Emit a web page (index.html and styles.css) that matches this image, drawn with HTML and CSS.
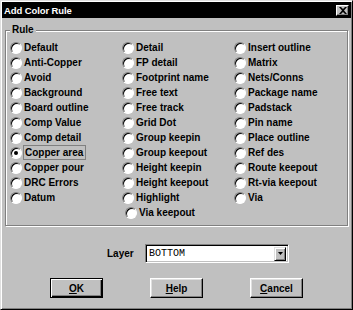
FILE: index.html
```html
<!DOCTYPE html>
<html lang="en">
<head>
  <meta charset="UTF-8">
  <title>Add Color Rule</title>
  <link rel="stylesheet" href="styles.css">
</head>
<body>
  <div class="window">
    <div class="titlebar">
      <span class="title">Add Color Rule</span>
      <span class="close-btn">
        <svg width="8" height="7" viewBox="0 0 8 7"><path d="M0 0h2l2 2 2-2h2L5 3.5 8 7H6L4 5 2 7H0l3-3.5z" fill="#000"/></svg>
      </span>
    </div>

    <div class="group">
      <span class="legend">Rule</span>
      <div class="columns">
        <div class="col">
          <div class="opt"><span class="radio"></span>Default</div>
          <div class="opt"><span class="radio"></span>Anti-Copper</div>
          <div class="opt"><span class="radio"></span>Avoid</div>
          <div class="opt"><span class="radio"></span>Background</div>
          <div class="opt"><span class="radio"></span>Board outline</div>
          <div class="opt"><span class="radio"></span>Comp Value</div>
          <div class="opt"><span class="radio"></span>Comp detail</div>
          <div class="opt"><span class="radio checked"></span><span class="focus">Copper area</span></div>
          <div class="opt"><span class="radio"></span>Copper pour</div>
          <div class="opt"><span class="radio"></span>DRC Errors</div>
          <div class="opt"><span class="radio"></span>Datum</div>
        </div>
        <div class="col">
          <div class="opt"><span class="radio"></span>Detail</div>
          <div class="opt"><span class="radio"></span>FP detail</div>
          <div class="opt"><span class="radio"></span>Footprint name</div>
          <div class="opt"><span class="radio"></span>Free text</div>
          <div class="opt"><span class="radio"></span>Free track</div>
          <div class="opt"><span class="radio"></span>Grid Dot</div>
          <div class="opt"><span class="radio"></span>Group keepin</div>
          <div class="opt"><span class="radio"></span>Group keepout</div>
          <div class="opt"><span class="radio"></span>Height keepin</div>
          <div class="opt"><span class="radio"></span>Height keepout</div>
          <div class="opt"><span class="radio"></span>Highlight</div>
          <div class="opt indent"><span class="radio"></span>Via keepout</div>
        </div>
        <div class="col">
          <div class="opt"><span class="radio"></span>Insert outline</div>
          <div class="opt"><span class="radio"></span>Matrix</div>
          <div class="opt"><span class="radio"></span>Nets/Conns</div>
          <div class="opt"><span class="radio"></span>Package name</div>
          <div class="opt"><span class="radio"></span>Padstack</div>
          <div class="opt"><span class="radio"></span>Pin name</div>
          <div class="opt"><span class="radio"></span>Place outline</div>
          <div class="opt"><span class="radio"></span>Ref des</div>
          <div class="opt"><span class="radio"></span>Route keepout</div>
          <div class="opt"><span class="radio"></span>Rt-via keepout</div>
          <div class="opt"><span class="radio"></span>Via</div>
        </div>
      </div>
    </div>

    <div class="layer-row">
      <span class="layer-label">Layer</span>
      <div class="select">
        <span class="select-text">BOTTOM</span>
        <span class="drop-btn">
          <svg width="5" height="3" viewBox="0 0 5 3"><path d="M0 0h5L2.5 3z" fill="#000"/></svg>
        </span>
      </div>
    </div>

    <div class="buttons">
      <button class="btn default"><u>O</u>K</button>
      <button class="btn"><u>H</u>elp</button>
      <button class="btn"><u>C</u>ancel</button>
    </div>
  </div>
</body>
</html>
```

FILE: styles.css
```css
body {
  margin: 0;
  background-color: #c0c0c0;
  font-family: 'Liberation Sans', Arial, sans-serif;
  font-size: 10px;
  font-weight: bold;
  color: #000;
}

.window {
  width: 353px;
  height: 310px;
  box-sizing: border-box;
  background-color: #c0c0c0;
  border: 1px solid;
  border-color: #dfdfdf #000 #000 #dfdfdf;
  box-shadow: inset 1px 1px #fff, inset -1px -1px #808080;
  padding: 1px;
}

.titlebar {
  height: 16px;
  background-color: #000;
  color: #fff;
  display: flex;
  align-items: center;
  justify-content: space-between;
  padding: 0 2px 0 2px;
}

.title {
  font-size: 9.5px;
  letter-spacing: -0.1px;
}

.close-btn {
  width: 13px;
  height: 11px;
  box-sizing: border-box;
  background-color: #c0c0c0;
  border: 1px solid;
  border-color: #fff #000 #000 #fff;
  box-shadow: inset -1px -1px #808080;
  display: flex;
  align-items: center;
  justify-content: center;
}

.group {
  position: relative;
  margin: 12px 3px 0 3px;
  height: 196px;
  box-sizing: border-box;
  border: 1px solid #808080;
  box-shadow: inset 1px 1px #fff, 1px 1px #fff;
  padding: 9px 0 0 4px;
}

.legend {
  position: absolute;
  left: 4px;
  top: -7px;
  padding: 0 2px;
  background-color: #c0c0c0;
  line-height: 12px;
}

.columns {
  display: flex;
}

.col {
  width: 112px;
  display: flex;
  flex-direction: column;
}

.opt {
  height: 15px;
  display: flex;
  align-items: center;
  gap: 1px;
  white-space: nowrap;
}

.opt.indent {
  padding-left: 3px;
}

.radio {
  width: 12px;
  height: 12px;
  box-sizing: border-box;
  border-radius: 50%;
  background-color: #fff;
  border: 1px solid;
  border-color: #808080 #fff #fff #808080;
  box-shadow: inset 1px 1px #000;
  margin-right: 1px;
  position: relative;
  flex: none;
}

.radio.checked::after {
  content: '';
  position: absolute;
  left: 3px;
  top: 3px;
  width: 4px;
  height: 4px;
  border-radius: 50%;
  background-color: #000;
}

.focus {
  border: 1px solid #808080;
  padding: 1px 2px 1px 1px;
  margin-left: -1px;
}

.layer-row {
  display: flex;
  align-items: center;
  margin-top: 18px;
  padding-left: 105px;
}

.layer-label {
  width: 38px;
}

.select {
  width: 144px;
  height: 19px;
  box-sizing: border-box;
  background-color: #fff;
  border: 1px solid;
  border-color: #808080 #fff #fff #808080;
  box-shadow: inset 1px 1px #000, inset -1px -1px #c0c0c0;
  display: flex;
  align-items: center;
  justify-content: space-between;
  padding: 0 2px 0 3px;
}

.select-text {
  font-family: 'Liberation Mono', 'Courier New', monospace;
  font-weight: normal;
  font-size: 10px;
}

.drop-btn {
  width: 12px;
  height: 14px;
  box-sizing: border-box;
  background-color: #c0c0c0;
  border: 1px solid;
  border-color: #dfdfdf #000 #000 #dfdfdf;
  box-shadow: inset 1px 1px #fff, inset -1px -1px #808080;
  display: flex;
  align-items: center;
  justify-content: center;
}

.buttons {
  display: flex;
  gap: 47px;
  margin-top: 15px;
  padding-left: 48px;
}

.btn {
  width: 53px;
  height: 20px;
  box-sizing: border-box;
  background-color: #c0c0c0;
  font-family: 'Liberation Sans', Arial, sans-serif;
  font-size: 10px;
  font-weight: bold;
  color: #000;
  border: 1px solid;
  border-color: #fff #000 #000 #fff;
  box-shadow: inset -1px -1px #808080, inset 1px 1px #dfdfdf;
  padding: 0;
}

.btn.default {
  border: 1px solid #000;
  box-shadow: inset 1px 1px #fff, inset -1px -1px #000, inset -2px -2px #808080;
}
```
